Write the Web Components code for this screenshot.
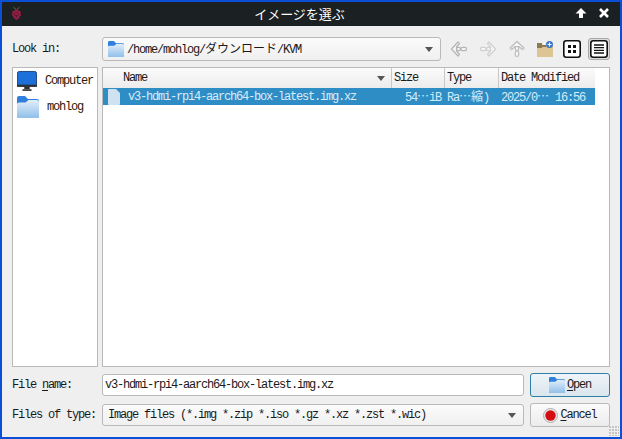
<!DOCTYPE html>
<html lang="ja">
<head>
<meta charset="utf-8">
<title>イメージを選ぶ</title>
<style>
    html, body { margin: 0; height: 100%; }
    body {
        font: 12px/14px "Liberation Mono", "Noto Sans CJK JP", monospace;
        letter-spacing: -1.2px;
        color: #1a1a1a;
        overflow: hidden;
    }
    .jp { font-family: "Noto Sans CJK JP", sans-serif; font-size: 12px; letter-spacing: 0; }
    u { text-underline-offset: 2px; }
</style>
</head>
<body>

<app-window>
    <title-bar slot="title">イメージを選ぶ</title-bar>

    <form-row>
        <span slot="label">Look in:</span>
        <qt-field combo>
            <folder-icon slot="icon" size="16"></folder-icon>
            /home/mohlog/<span class="jp">ダウンロード</span>/KVM
        </qt-field>
        <tool-bar></tool-bar>
    </form-row>

    <div style="display:flex;flex:1;min-height:0;margin:6px 0">
        <side-panel>
            <side-place icon="computer">Computer</side-place>
            <side-place icon="folder">mohlog</side-place>
        </side-panel>
        <file-table></file-table>
    </div>

    <form-row style="margin-bottom:6px">
        <span slot="label">File <u>n</u>ame:</span>
        <qt-field>v3-hdmi-rpi4-aarch64-box-latest.img.xz</qt-field>
        <qt-button focused>
            <folder-icon slot="icon" size="16"></folder-icon>
            <span><u>O</u>pen</span>
        </qt-button>
    </form-row>

    <form-row>
        <span slot="label">Files of type:</span>
        <qt-field combo>Image files (*.img *.zip *.iso *.gz *.xz *.zst *.wic)</qt-field>
        <qt-button>
            <svg slot="icon" width="15" height="15" viewBox="0 0 15 15">
                <circle cx="7.500" cy="7.500" r="7" fill="#e8e8e8" stroke="#b0b0b0"/>
                <circle cx="7.500" cy="7.500" r="5.200" fill="#d40d12"/>
            </svg>
            <span><u>C</u>ancel</span>
        </qt-button>
    </form-row>
</app-window>

<script>
const css = (text) => `<style>${text}</style>`;

class FolderIcon extends HTMLElement {
    constructor() {
        super();
        const size = this.getAttribute('size') || 22;
        this.attachShadow({ mode: 'open' }).innerHTML = css(`
            :host { display: block; flex: none; width: ${size}px; height: ${size}px; }
            svg { display: block; }
        `) + `
            <svg viewBox="0 0 22 22" width="${size}" height="${size}">
                <defs>
                    <linearGradient id="fg" x1="0" y1="0" x2="0" y2="1">
                        <stop offset="0" stop-color="#e3eefa"/>
                        <stop offset="1" stop-color="#8fc0ea"/>
                    </linearGradient>
                </defs>
                <path d="M0 2a2 2 0 0 1 2-2h6l3 3h9a2 2 0 0 1 2 2v15a2 2 0 0 1-2 2H2a2 2 0 0 1-2-2z" fill="#2f80dc"/>
                <path d="M0 8q0-1.500 2-1.500h6.500l3-2.500h8.500a2 2 0 0 1 2 2v14a2 2 0 0 1-2 2H2a2 2 0 0 1-2-2z" fill="url(#fg)"/>
            </svg>`;
    }
}

class AppWindow extends HTMLElement {
    constructor() {
        super();
        this.attachShadow({ mode: 'open' }).innerHTML = css(`
            :host {
                display: flex; flex-direction: column; box-sizing: border-box;
                width: 622px; height: 439px;
                border: 2px solid #0b4fd6;
                background: #efefef; position: relative;
            }
            .content {
                flex: 1; min-height: 0;
                display: flex; flex-direction: column;
                padding: 11px 10px 10px;
            }
            .grip {
                position: absolute; right: 1px; bottom: 1px; width: 10px; height: 10px;
                background: radial-gradient(circle at 1px 1px, #c4c4c4 1px, transparent 1px) 0 0 / 3px 3px;
            }
        `) + `
            <slot name="title"></slot>
            <div class="content"><slot></slot></div>
            <div class="grip"></div>`;
    }
}

class TitleBar extends HTMLElement {
    constructor() {
        super();
        this.attachShadow({ mode: 'open' }).innerHTML = css(`
            :host {
                display: flex; align-items: center; box-sizing: border-box; height: 24px;
                background: #1b2022; color: #fff;
                padding: 0 9px 2px 8px;
                font: 13px "Noto Sans CJK JP", sans-serif; letter-spacing: 0;
            }
            .logo { width: 13px; height: 16px; }
            .name { flex: 1; text-align: center; padding-left: 2px; }
            .btn { width: 14px; height: 14px; }
            .btn + .btn { margin-left: 9px; }
        `) + `
            <svg class="logo" viewBox="0 0 15 18">
                <path d="M3 1l4 3.500-1 .5zM12 1L8 4.500l1 .5z" fill="#5f8526"/>
                <g fill="#941c44">
                    <circle cx="7.500" cy="6.500" r="2"/><circle cx="4.500" cy="8" r="1.800"/><circle cx="10.500" cy="8" r="1.800"/>
                    <circle cx="3.800" cy="11" r="1.700"/><circle cx="7.500" cy="10" r="2"/><circle cx="11.200" cy="11" r="1.700"/>
                    <circle cx="5.500" cy="13.500" r="1.800"/><circle cx="9.500" cy="13.500" r="1.800"/><circle cx="7.500" cy="15.500" r="1.600"/>
                </g>
            </svg>
            <div class="name"><slot></slot></div>
            <svg class="btn" viewBox="0 0 14 14"><path d="M7 2L1.500 7.500h3.500V12h4V7.500h3.500z" fill="#fff"/></svg>
            <svg class="btn" viewBox="0 0 14 14"><path d="M3 3l8 8M11 3l-8 8" stroke="#fff" stroke-width="2.600" fill="none"/></svg>`;
    }
}

class FormRow extends HTMLElement {
    constructor() {
        super();
        this.attachShadow({ mode: 'open' }).innerHTML = css(`
            :host { display: flex; align-items: center; height: 24px; flex: none; }
            .label { width: 90px; flex: none; }
            .field { flex: 1; min-width: 0; display: flex; align-items: center; gap: 6px; }
        `) + `
            <div class="label"><slot name="label"></slot></div>
            <div class="field"><slot></slot></div>`;
    }
}

class QtField extends HTMLElement {
    constructor() {
        super();
        const arrow = this.hasAttribute('combo');
        this.attachShadow({ mode: 'open' }).innerHTML = css(`
            :host {
                display: flex; align-items: center; box-sizing: border-box; flex: 1; min-width: 0;
                height: ${this.querySelector('folder-icon') ? 24 : 22}px; border: 1px solid #b9b9b9; border-radius: 3px;
                background: ${arrow ? 'linear-gradient(#fbfbfb,#f0f0f0)' : '#fff'};
                padding: 0 8px 0 ${arrow ? 5 : 2}px; gap: 3px; white-space: nowrap;
            }
            .text { flex: 1; min-width: 0; }
            .arrow { width: 0; height: 0; border: 4px solid transparent; border-top: 5px solid #555; border-bottom: 0; margin-right: -1px; }
        `) + `<slot name="icon"></slot><div class="text"><slot></slot></div>${arrow ? '<div class="arrow"></div>' : ''}`;
    }
}

class ToolBar extends HTMLElement {
    constructor() {
        super();
        const back = (transform, tone) => `<svg viewBox="0 0 18 18" width="18" height="18"><g transform="${transform}" fill="#f6f6f6" stroke="${tone}" stroke-width="1.200" stroke-linejoin="round">
            <path d="M8 2L1.500 9 8 16l1.500-1.500L6.500 11V7l3-3.500z"/>
            <rect x="6.500" y="7.300" width="4" height="3.400" rx="1.700"/>
            <rect x="11" y="7.300" width="5.500" height="3.400" rx="1.700"/>
        </g></svg>`;
        this.attachShadow({ mode: 'open' }).innerHTML = css(`
            :host { display: flex; align-items: center; height: 24px; flex: none; gap: 11px; margin-left: 3px; }
            svg { display: block; flex: none; }
            .gap { margin-left: -1px; }
            .tight { margin-left: -2px; }
            .on { box-sizing: border-box; width: 22px; height: 22px; border: 1px solid #a8a8a8; border-radius: 3px; background: #dcdcdc; display: flex; align-items: center; justify-content: center; margin-left: -4px; }
        `) + `
            ${back('', '#b4b4b4')}
            ${back('rotate(180 9 9)', '#cfcfcf')}
            ${back('rotate(90 9 9)', '#bcbcbc')}
            <svg class="gap" viewBox="0 0 18 18" width="18" height="18">
                <path d="M1 4h5l2 2h9v11H1z" fill="#dcc593"/>
                <path d="M1 3h5v5H1z" fill="#8e7a4e"/>
                <path d="M6 6h4" stroke="#8e7a4e" stroke-width="2"/>
                <circle cx="13.500" cy="4.500" r="3.500" fill="#3d74c4"/>
                <path d="M13.500 2.500v4M11.500 4.500h4" stroke="#fff"/>
            </svg>
            <svg class="tight" viewBox="0 0 18 18" width="18" height="18">
                <rect x=".8" y=".8" width="16.400" height="16.400" rx="2.500" fill="#fff" stroke="#111" stroke-width="1.600"/>
                <path d="M5 5h3v3H5zM10 5h3v3h-3zM5 10h3v3H5zM10 10h3v3h-3z" fill="#111"/>
            </svg>
            <div class="on">
                <svg viewBox="0 0 18 18" width="18" height="18">
                    <rect x=".8" y=".8" width="16.400" height="16.400" rx="2.500" fill="#fff" stroke="#111" stroke-width="1.600"/>
                    <path d="M4 5h10M4 7.700h10M4 10.400h10M4 13h10" stroke="#111" stroke-width="1.300"/>
                </svg>
            </div>`;
    }
}

class SidePanel extends HTMLElement {
    constructor() {
        super();
        this.attachShadow({ mode: 'open' }).innerHTML = css(`
            :host {
                display: flex; flex-direction: column; box-sizing: border-box;
                width: 86px; flex: none; margin-right: 4px;
                background: #fff; border: 1px solid #b9b9b9;
                padding: 2px 4px;
                gap: 4px;
            }
        `) + `<slot></slot>`;
    }
}

class SidePlace extends HTMLElement {
    constructor() {
        super();
        const computer = `<svg viewBox="0 0 22 22" width="22" height="22" style="display:block">
            <rect x=".5" y=".5" width="21" height="16" rx="2" fill="#1d6fd9" stroke="#1c3f6e"/>
            <path d="M0 15h22v2.500H0z" fill="#2c3238"/><path d="M8 17h6v3H8z" fill="#2c3238"/><path d="M6 20h10v2H6z" fill="#444"/>
        </svg>`;
        this.attachShadow({ mode: 'open' }).innerHTML = css(`
            :host { display: flex; align-items: center; gap: 8px; height: 22px; white-space: nowrap; color: #2b1a08; }
        `) + `${this.getAttribute('icon') === 'computer' ? computer : '<folder-icon></folder-icon>'}<slot></slot>`;
    }
}

class FileTable extends HTMLElement {
    constructor() {
        super();
        this.attachShadow({ mode: 'open' }).innerHTML = css(`
            :host {
                display: flex; flex-direction: column; flex: 1; min-width: 0;
                background: #fff; border: 1px solid #b9b9b9;
            }
            .head, .row { display: grid; grid-template-columns: 288px 53px 54px 97px; width: 492px; }
            .head { height: 20px; background: linear-gradient(#fbfbfb,#ececec); }
            .head > div {
                display: flex; align-items: center; padding-left: 2px;
                border-left: 1px solid #c8c8c8; white-space: nowrap;
            }
            .head > div:first-child { border-left: 0; padding-left: 20px; justify-content: space-between; padding-right: 6px; }
            .sort { width: 0; height: 0; border: 4px solid transparent; border-top: 5px solid #555; border-bottom: 0; }
            .row { height: 17px; background: #2f8dc6; color: #d8ecf8; align-items: center; white-space: nowrap; }
            .row > div { padding-left: 3px; }
            .row .name { display: flex; align-items: center; gap: 8px; padding-left: 5px; }
            .row .size { text-align: right; padding-right: 3px; padding-left: 0; }
            .e { font-family: "Noto Sans CJK JP", sans-serif; font-size: 12px; letter-spacing: 0; }
        `) + `
            <div class="head">
                <div>Name<span class="sort"></span></div><div>Size</div><div>Type</div><div>Date Modified</div>
            </div>
            <div class="row">
                <div class="name">
                    <svg width="12" height="16" viewBox="0 0 12 16" style="flex:none"><path d="M0 1a1 1 0 0 1 1-1h7l4 4v11a1 1 0 0 1-1 1H1a1 1 0 0 1-1-1z" fill="#cfe2ef"/></svg>
                    <span>v3-hdmi-rpi4-aarch64-box-latest.img.xz</span>
                </div>
                <div class="size">54<span class="e">…</span>iB</div>
                <div>Ra<span class="e">…縮</span>)</div>
                <div>2025/0<span class="e">…</span> 16:56</div>
            </div>`;
    }
}

class QtButton extends HTMLElement {
    constructor() {
        super();
        const focus = this.hasAttribute('focused');
        this.attachShadow({ mode: 'open' }).innerHTML = css(`
            :host {
                display: flex; align-items: center; justify-content: center; gap: 2px;
                box-sizing: border-box; width: 80px; height: 24px; flex: none;
                border: 1px solid ${focus ? '#2d7fa8' : '#b9b9b9'}; border-radius: 3px;
                background: ${focus ? 'linear-gradient(#eef4f9,#dbe5ed)' : 'linear-gradient(#fbfbfb,#ececec)'};
            }
        `) + `<slot name="icon"></slot><slot></slot>`;
    }
}

customElements.define('folder-icon', FolderIcon);
customElements.define('app-window', AppWindow);
customElements.define('title-bar', TitleBar);
customElements.define('form-row', FormRow);
customElements.define('qt-field', QtField);
customElements.define('tool-bar', ToolBar);
customElements.define('side-panel', SidePanel);
customElements.define('side-place', SidePlace);
customElements.define('file-table', FileTable);
customElements.define('qt-button', QtButton);
</script>
</body>
</html>
